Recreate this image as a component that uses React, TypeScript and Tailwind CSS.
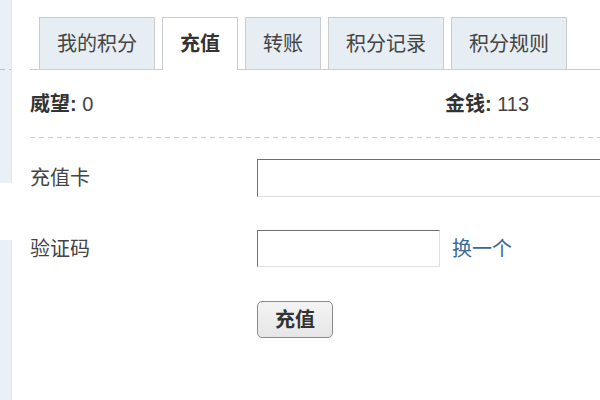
import React from "react";

const tabs = ["我的积分", "充值", "转账", "积分记录", "积分规则"];

export default function App() {
  return (
    <div
      className="w-[600px] h-[400px] flex bg-white overflow-hidden text-[#444]"
      style={{ fontFamily: '"Liberation Sans", "Noto Sans CJK SC", sans-serif' }}
    >
      {/* left strip */}
      <div className="w-[12px] shrink-0 flex flex-col">
        <div className="h-[183px] bg-[#e9f0f6] border-r border-[#dfe7ee] flex flex-col">
          <div className="h-[69px]" />
          <div className="h-px bg-[repeating-linear-gradient(90deg,#b8bfc6_0_5px,transparent_5px_9px)]" />
        </div>
        <div className="h-[57px] bg-white" />
        <div className="flex-1 bg-[#e9f0f6] border-r border-[#dfe7ee]" />
      </div>

      {/* main */}
      <div className="ml-[18px] w-[600px] shrink-0 flex flex-col">
        <div className="h-[70px] pt-[17px] pl-[9px] flex gap-[7px] border-b border-[#c8cdd2]">
          {tabs.map((t, i) => {
            const active = i === 1;
            return (
              <div
                key={t}
                className={
                  active
                    ? "h-[53px] px-[17px] flex items-center border border-b-0 border-[#c8cdd2] bg-white text-[20px] font-bold text-[#333] relative z-10"
                    : "h-[52px] px-[17px] flex items-center border border-[#c8cdd2] border-b-0 bg-[#e6edf3] text-[20px] text-[#444]"
                }
              >
                {t}
              </div>
            );
          })}
        </div>

        <div className="h-[67px] flex items-center text-[20px]">
          <div className="w-[415px]">
            <span className="font-bold text-[#333]">威望:</span> 0
          </div>
          <div>
            <span className="font-bold text-[#333]">金钱:</span> 113
          </div>
        </div>
        <div className="h-px bg-[repeating-linear-gradient(90deg,#c8c8c8_0_5px,transparent_5px_9px)]" />

        <div className="mt-[21px] flex items-center">
          <div className="w-[227px] text-[20px] text-[#444]">充值卡</div>
          <input className="w-[360px] h-[38px] border border-t-[#6f6f6f] border-l-[#6f6f6f] border-r-[#dedede] border-b-[#dedede] bg-white outline-none" />
        </div>

        <div className="mt-[33px] flex items-center">
          <div className="w-[227px] text-[20px] text-[#444]">验证码</div>
          <input className="w-[183px] h-[37px] border border-t-[#6f6f6f] border-l-[#6f6f6f] border-r-[#dedede] border-b-[#dedede] bg-white outline-none" />
          <a className="ml-[12px] text-[20px] text-[#3a6897]">换一个</a>
        </div>

        <div className="mt-[34px] pl-[227px]">
          <button className="w-[76px] h-[37px] rounded-[5px] border border-[#8a8a8a] bg-[linear-gradient(#f4f4f4,#e6e6e6)] text-[20px] font-bold text-[#333] flex items-center justify-center">
            充值
          </button>
        </div>
      </div>
    </div>
  );
}
